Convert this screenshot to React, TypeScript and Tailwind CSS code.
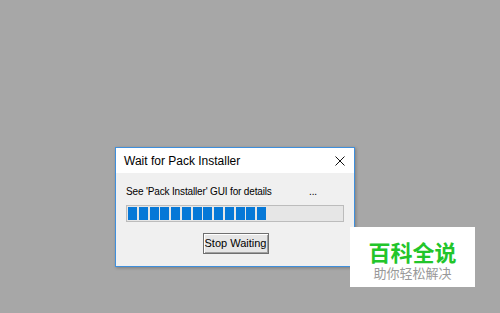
export default function App() {
  const blocks = Array.from({ length: 13 });
  return (
    <div className="relative w-[500px] h-[313px] bg-[#a7a7a7] overflow-hidden" style={{ fontFamily: '"Liberation Sans", Arial, sans-serif' }}>
      <div className="absolute left-[115px] top-[147px] w-[240px] h-[120px] border border-[#3f8fdc] bg-[#f0f0f0] flex flex-col shadow-[1px_1px_3px_rgba(0,0,0,0.25)]">
        <div className="h-[25px] bg-white flex items-center justify-between pl-[8px] pr-[9px]">
          <span className="text-[12px] text-black leading-none">Wait for Pack Installer</span>
          <svg width="10" height="10" viewBox="0 0 10 10" className="block">
            <path d="M0.5 0.5 L9.5 9.5 M9.5 0.5 L0.5 9.5" stroke="#111" strokeWidth="1" />
          </svg>
        </div>
        <div className="flex flex-col pl-[10px] pr-[10px]">
          <div className="flex items-center h-[12px] mt-[13px] text-[10px] tracking-[-0.15px] leading-none text-black">
            <span className="w-[183px]">See 'Pack Installer' GUI for details</span>
            <span>...</span>
          </div>
          <div className="mt-[7px] w-[218px] h-[17px] border border-[#bcbcbc] bg-[#e6e6e6] flex items-center gap-[1.75px] pl-[1px]">
            {blocks.map((_, i) => (
              <div key={i} className="w-[9px] h-[13px] bg-[#0678d7]" />
            ))}
          </div>
          <div className="flex justify-center mt-[11px] pl-[1px]">
            <div className="w-[66px] h-[21px] border border-[#6f6f6f] bg-[#e6e6e6] shadow-[inset_1px_1px_0_#fff,inset_-1px_-1px_0_#a0a0a0] flex items-center justify-center text-[11px] text-black leading-none">
              Stop Waiting
            </div>
          </div>
        </div>
      </div>
      <div className="absolute left-[350px] top-[227px] w-[125px] h-[60px] bg-white flex flex-col items-center pt-[13px]" style={{ fontFamily: '"Noto Sans CJK SC", sans-serif' }}>
        <span className="text-[22px] leading-[22px] font-bold text-[#22c52a]">百科全说</span>
        <span className="text-[13px] leading-[14px] text-[#999999] mt-[4px]">助你轻松解决</span>
      </div>
    </div>
  );
}
